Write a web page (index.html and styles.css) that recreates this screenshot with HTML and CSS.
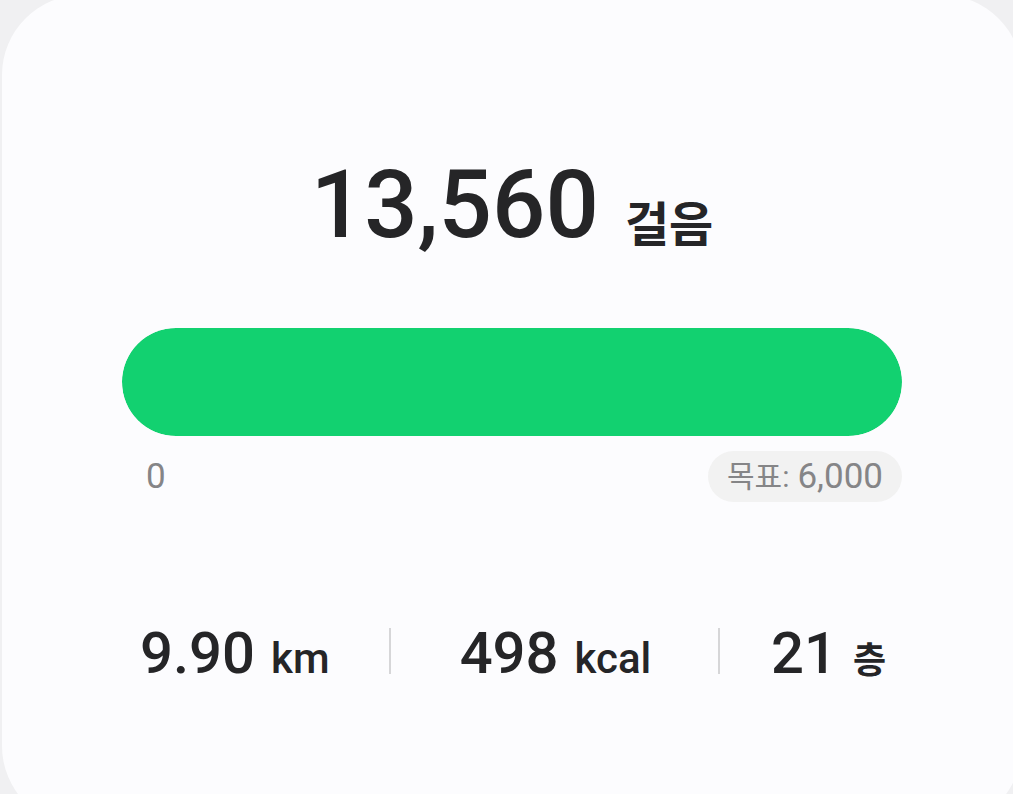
FILE: index.html
```html
<!DOCTYPE html>
<html lang="ko">
<head>
<meta charset="utf-8">
<meta name="viewport" content="width=device-width, initial-scale=1">
<title>걸음</title>
<link rel="stylesheet" href="styles.css">
</head>
<body>
<main class="card">
  <h1 class="steps"><span class="steps-value">13,560</span><span class="steps-unit">걸음</span></h1>
  <div class="bar" role="progressbar" aria-label="걸음" aria-valuemin="0" aria-valuemax="6000" aria-valuenow="6000"><div class="bar-fill"></div></div>
  <div class="scale">
    <span class="scale-start">0</span>
    <span class="goal"><span class="goal-label">목표:</span><span>6,000</span></span>
  </div>
  <div class="stats">
    <div class="stat"><span class="stat-value">9.90</span><span class="stat-unit">km</span></div>
    <div class="divider"></div>
    <div class="stat stat-middle"><span class="stat-value">498</span><span class="stat-unit">kcal</span></div>
    <div class="divider"></div>
    <div class="stat stat-last"><span class="stat-value">21</span><span class="stat-unit stat-unit-ko">층</span></div>
  </div>
</main>
</body>
</html>
```
FILE: styles.css
```css
* {
  box-sizing: border-box;
}

html {
  overflow: hidden;
  background: #f0f0f2;
}

body {
  height: 100vh;
  margin: 0;
  overflow: hidden;
  color: #252527;
  font-family: Roboto, "Noto Sans CJK KR", sans-serif;
}

.card {
  margin: -5px -9px 0 2px;
  padding: 146px 120px 137px;
  border-radius: 80px;
  background: #fcfcfe;
}

.steps {
  display: flex;
  justify-content: center;
  align-items: center;
  gap: 26px;
  margin: 0 0 59px;
  font-weight: 500;
  line-height: 128px;
}

.steps-value {
  font-size: 94px;
}

.steps-unit {
  padding-top: 42px;
  font-size: 48px;
  font-weight: 700;
  line-height: 64px;
}

.bar {
  height: 108px;
  overflow: hidden;
  border-radius: 54px;
  background: #f2f2f2;
}

.bar-fill {
  height: 100%;
  border-radius: 54px;
  background: #12d170;
}

.scale {
  display: flex;
  justify-content: space-between;
  align-items: center;
  margin-top: 15px;
  color: #858587;
  font-size: 35px;
  line-height: 51px;
}

.scale-start {
  padding-left: 24px;
}

.goal {
  display: flex;
  align-items: center;
  gap: 8px;
  padding: 0 19px;
  border-radius: 26px;
  background: #f2f2f2;
}

.goal-label {
  font-size: 30px;
}

.stats {
  display: grid;
  grid-template-columns: 267fr 2px 327fr 2px 182fr;
  align-items: center;
  margin-top: 115px;
  font-weight: 500;
  line-height: 72px;
}

.stat {
  display: flex;
  align-items: baseline;
  gap: 16px;
  padding: 0 16px 0 18px;
}

.stat-middle {
  justify-content: center;
}

.stat-last {
  justify-content: flex-end;
}

.stat-value {
  font-size: 58px;
}

.stat-unit {
  font-size: 42px;
  line-height: 48px;
}

.stat-unit-ko {
  font-size: 36px;
  font-weight: 700;
}

.divider {
  height: 46px;
  margin-bottom: 4px;
  background: #d6d6d8;
}
```
